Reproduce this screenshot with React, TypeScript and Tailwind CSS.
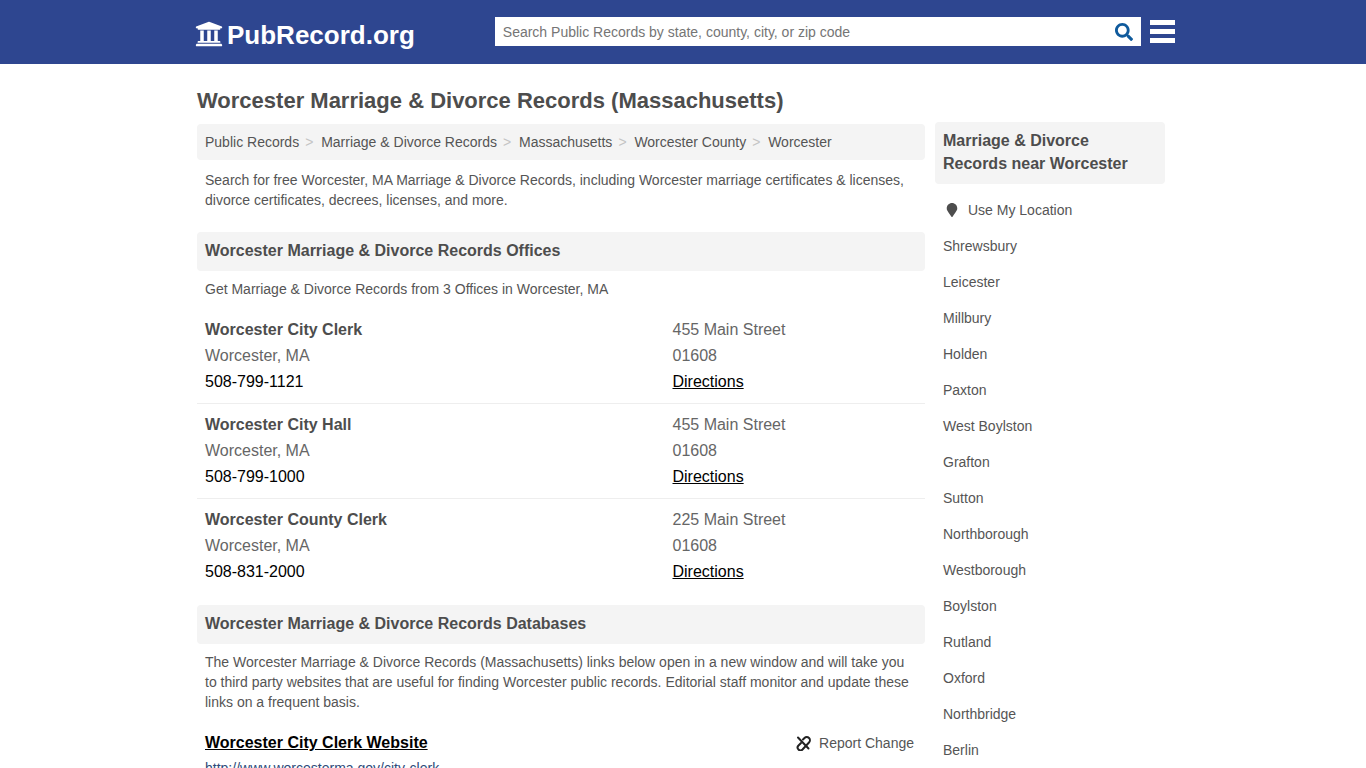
import { FaMapMarker, FaSearch, FaUniversity } from "react-icons/fa"

const crumbs = [
  "Public Records",
  "Marriage & Divorce Records",
  "Massachusetts",
  "Worcester County",
  "Worcester",
]

const offices = [
  { name: "Worcester City Clerk", street: "455 Main Street", phone: "508-799-1121" },
  { name: "Worcester City Hall", street: "455 Main Street", phone: "508-799-1000" },
  { name: "Worcester County Clerk", street: "225 Main Street", phone: "508-831-2000" },
]

const cities = [
  "Shrewsbury",
  "Leicester",
  "Millbury",
  "Holden",
  "Paxton",
  "West Boylston",
  "Grafton",
  "Sutton",
  "Northborough",
  "Westborough",
  "Boylston",
  "Rutland",
  "Oxford",
  "Northbridge",
  "Berlin",
]

export default function App() {
  return (
    <div className="h-screen overflow-hidden bg-white font-['Liberation_Sans',Arial,sans-serif] text-[#555555]">
      <Header />
      <div className="mx-auto flex w-[972px] gap-[10px]">
        <main className="w-[728px]">
          <h1 className="mt-[24px] text-[22px] leading-[26px] font-bold text-[#4d4d4d]">
            Worcester Marriage &amp; Divorce Records (Massachusetts)
          </h1>
          <nav className="mt-[10px] flex h-[36px] items-center rounded bg-[#f4f4f4] px-2 text-sm">
            {crumbs.map((c, i) => (
              <span key={c} className="flex items-center">
                {i > 0 && <span className="w-[22px] pl-[6px] text-[#c4c4c4]">&gt;</span>}
                {c}
              </span>
            ))}
          </nav>
          <p className="mt-[10px] px-2 text-sm leading-5">
            Search for free Worcester, MA Marriage &amp; Divorce Records, including Worcester
            marriage certificates &amp; licenses, divorce certificates, decrees, licenses, and more.
          </p>
          <SectionTitle className="mt-[22px]">Worcester Marriage &amp; Divorce Records Offices</SectionTitle>
          <p className="mt-2 px-2 text-sm leading-5">
            Get Marriage &amp; Divorce Records from 3 Offices in Worcester, MA
          </p>
          <div className="mt-[10px]">
            {offices.map((o, i) => (
              <Office key={o.name} {...o} last={i === offices.length - 1} />
            ))}
          </div>
          <SectionTitle className="mt-[12px]">Worcester Marriage &amp; Divorce Records Databases</SectionTitle>
          <p className="mt-2 px-2 text-sm leading-5">
            The Worcester Marriage &amp; Divorce Records (Massachusetts) links below open in a new
            window and will take you to third party websites that are useful for finding Worcester
            public records. Editorial staff monitor and update these links on a frequent basis.
          </p>
          <div className="mt-[16px] flex items-center justify-between px-2">
            <a className="text-base leading-[30px] font-bold text-black underline">Worcester City Clerk Website</a>
            <span className="flex items-center gap-2 pr-[3px] text-sm">
              <ReportIcon />
              Report Change
            </span>
          </div>
          <a className="block px-2 text-sm leading-5 text-[#2e4a7a] underline">http://www.worcesterma.gov/city-clerk</a>
        </main>
        <aside className="w-[230px] pt-[58px]">
          <h2 className="rounded bg-[#f4f4f4] px-2 pt-[7px] pb-[9px] text-base leading-[23px] font-bold text-[#4d4d4d]">
            Marriage &amp; Divorce Records near Worcester
          </h2>
          <ul className="mt-2 text-sm">
            <li className="flex h-9 items-center pl-[10px]">
              <FaMapMarker className="mr-[9px] h-[14px] w-[14px] text-[#4d4d4d]" />
              Use My Location
            </li>
            {cities.map((c) => (
              <li key={c} className="flex h-9 items-center px-2">
                {c}
              </li>
            ))}
          </ul>
        </aside>
      </div>
    </div>
  )
}

function Header() {
  return (
    <header className="h-16 bg-[#2e4690]">
      <div className="mx-auto flex h-full w-[984px] items-start pl-[4px]">
        <a className="mt-[19px] flex h-[32px] shrink-0 items-center text-white">
          <FaUniversity className="mb-[3px] h-[28px] w-[28px]" />
          <span className="ml-[4px] text-[26px] font-bold">PubRecord.org</span>
        </a>
        <div className="mt-[17px] ml-[80px] flex h-[29px] w-[646px] shrink-0 items-center bg-white pr-[8px] pl-2">
          <span className="flex-1 text-sm text-[#757575]">
            Search Public Records by state, county, city, or zip code
          </span>
          <FaSearch className="h-[18px] w-[18px] text-[#0f5a9c]" />
        </div>
        <div className="mt-[20px] ml-[9px] flex w-[25px] shrink-0 flex-col gap-[4px]">
          <div className="h-[5px] bg-white" />
          <div className="h-[5px] bg-white" />
          <div className="h-[5px] bg-white" />
        </div>
      </div>
    </header>
  )
}

function ReportIcon() {
  return (
    <svg viewBox="0 0 15 15" className="h-[15px] w-[15px]" fill="none" stroke="#222222" strokeWidth="2" strokeLinecap="round">
      <path d="M2 1.5 L12.5 12.5" />
      <path d="M5 7 L2.5 9.5 A2.8 2.8 0 0 0 6.5 13.5 L13 6.5 A3 3 0 0 0 8.5 2 L7 3.5" />
    </svg>
  )
}

function SectionTitle({ children, className }: { children: React.ReactNode; className?: string }) {
  return (
    <h2 className={`flex h-[39px] items-center rounded bg-[#f4f4f4] px-2 pb-[2px] text-base font-bold text-[#4d4d4d] ${className}`}>
      {children}
    </h2>
  )
}

function Office({
  name,
  street,
  phone,
  last,
}: {
  name: string
  street: string
  phone: string
  last: boolean
}) {
  return (
    <div className={`flex px-2 pt-[8px] pb-[8px] text-base leading-[26px] text-[#666666] ${last ? "" : "border-b border-[#eeeeee]"}`}>
      <div className="w-[467.5px]">
        <div className="font-bold text-[#4d4d4d]">{name}</div>
        <div>Worcester, MA</div>
        <div className="text-black">{phone}</div>
      </div>
      <div>
        <div>{street}</div>
        <div>01608</div>
        <a className="text-black underline">Directions</a>
      </div>
    </div>
  )
}
